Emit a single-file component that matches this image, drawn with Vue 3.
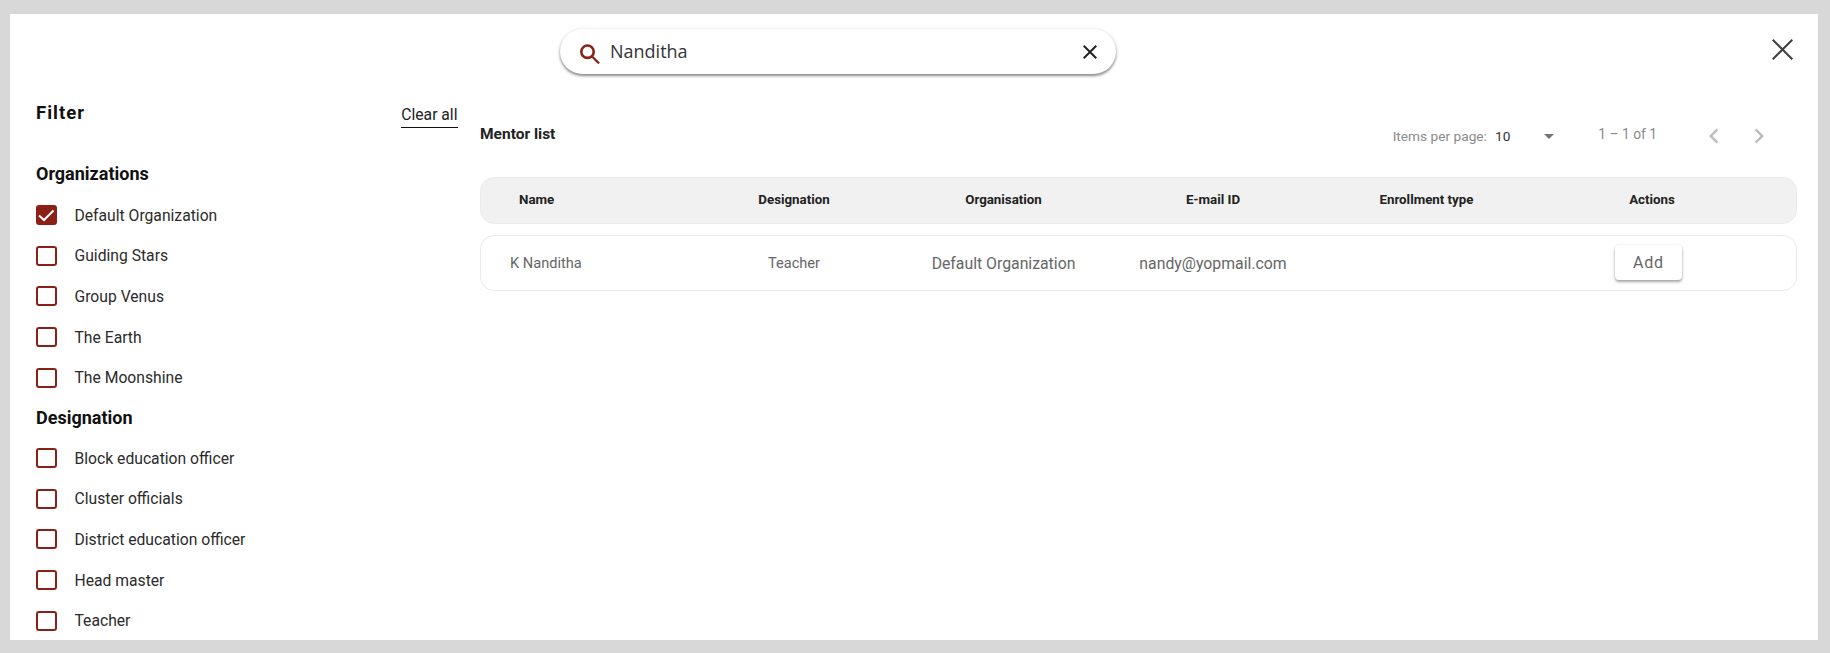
<script setup>
const orgs = [
  { label: 'Default Organization', checked: true },
  { label: 'Guiding Stars' },
  { label: 'Group Venus' },
  { label: 'The Earth' },
  { label: 'The Moonshine' },
]
const desigs = [
  { label: 'Block education officer' },
  { label: 'Cluster officials' },
  { label: 'District education officer' },
  { label: 'Head master' },
  { label: 'Teacher' },
]
const groups = [
  { title: 'Organizations', items: orgs },
  { title: 'Designation', items: desigs },
]
const heads = ['Designation', 'Organisation', 'E-mail ID', 'Enrollment type', 'Actions']
</script>

<template>
  <div class="page">
    <div class="panel">
      <div class="top">
        <div class="search">
          <svg class="s-icon" viewBox="0 0 20 20" width="20" height="20"><circle cx="7.5" cy="7.7" r="6.2" stroke="#8a2016" stroke-width="2.6" fill="none"/><path d="M11.8 12.2 19 19.4" stroke="#8a2016" stroke-width="2.2" fill="none"/></svg>
          <span class="s-text">Nanditha</span>
          <svg class="s-clear" viewBox="0 0 24 24" width="24" height="24"><path fill="#222" d="M19 6.41 17.59 5 12 10.59 6.41 5 5 6.41 10.59 12 5 17.59 6.41 19 12 13.41 17.59 19 19 17.59 13.41 12z"/></svg>
        </div>
        <svg class="close" viewBox="0 0 21 21" width="21" height="21"><path d="M.7.7 20.3 20.3M20.3.7.7 20.3" stroke="#404040" stroke-width="2" fill="none"/></svg>
      </div>
      <div class="body">
        <aside class="filter">
          <div class="f-head">
            <span class="f-title">Filter</span>
            <span class="clear">Clear all</span>
          </div>
          <div v-for="g in groups" :key="g.title" class="group">
            <div class="g-title">{{ g.title }}</div>
            <div v-for="i in g.items" :key="i.label" class="item">
              <span class="box" :class="{ on: i.checked }">
                <svg v-if="i.checked" viewBox="0 0 21 20" width="21" height="20"><path d="M3 10.5 8 15 17.5 5.5" stroke="#fff" stroke-width="2" fill="none"/></svg>
              </span>
              <span class="lbl">{{ i.label }}</span>
            </div>
          </div>
        </aside>
        <main class="main">
          <div class="m-head">
            <span class="m-title">Mentor list</span>
            <div class="pager">
              <span class="ipp">Items per page:</span>
              <span class="ten">10</span>
              <span class="caret"></span>
              <span class="range">1 – 1 of 1</span>
              <svg class="chev" viewBox="0 0 24 24" width="30" height="30"><path fill="#bdbdbd" d="M15.41 7.41 14 6l-6 6 6 6 1.41-1.41L10.83 12z"/></svg>
              <svg class="chev second" viewBox="0 0 24 24" width="30" height="30"><path fill="#bdbdbd" d="M8.59 16.59 10 18l6-6-6-6-1.41 1.41L13.17 12z"/></svg>
            </div>
          </div>
          <div class="t-row t-header">
            <span class="name-h">Name</span>
            <span v-for="h in heads" :key="h">{{ h }}</span>
          </div>
          <div class="t-row t-body">
            <span class="name-c">K Nanditha</span>
            <span class="small">Teacher</span>
            <span>Default Organization</span>
            <span>nandy@yopmail.com</span>
            <span></span>
            <span class="act"><button class="add">Add</button></span>
          </div>
        </main>
      </div>
    </div>
  </div>
</template>

<style>
html, body { margin: 0; background: #d8d8d8; }
</style>

<style scoped>
.page {
  width: 1830px;
  height: 653px;
  box-sizing: border-box;
  padding: 14px 12px 13px 10px;
  background: #d8d8d8;
  font-family: Roboto, sans-serif;
  overflow: hidden;
}
.panel {
  height: 100%;
  background: #fff;
  display: flex;
  flex-direction: column;
  overflow: hidden;
}
.top {
  height: 60px;
  flex: none;
  position: relative;
  padding: 15px 0 0 550px;
  box-sizing: border-box;
}
.search {
  width: 556px;
  height: 45px;
  border-radius: 23px;
  background: #fff;
  box-shadow: 0 2px 3px rgba(0,0,0,.45), 0 0 4px rgba(0,0,0,.08);
  display: flex;
  align-items: center;
  box-sizing: border-box;
  padding: 0 14px 0 20px;
}
.s-icon { flex: none; margin-top: 4px; }
.s-text {
  font-family: "Open Sans", sans-serif;
  font-size: 18px;
  color: #333;
  margin-left: 10px;
  margin-bottom: 2px;
  flex: 1;
}
.close { position: absolute; right: 25px; top: 25px; }
.body { display: flex; flex: 1; min-height: 0; }
.filter { width: 470px; flex: none; box-sizing: border-box; padding: 0 22.5px 0 26px; }
.f-head {
  display: flex;
  justify-content: space-between;
  align-items: center;
  height: 78px;
}
.f-title { font-size: 18.5px; font-weight: 700; letter-spacing: 1px; color: #111; }
.clear {
  font-size: 15.7px;
  color: #222;
  border-bottom: 1.5px solid #111;
  padding-bottom: 3px;
  margin-top: 6px;
}
.g-title {
  height: 40px;
  display: flex;
  align-items: center;
  font-size: 18px;
  font-weight: 700;
  color: #111;
}
.f-head + .group .g-title { height: 43px; }
.item { height: 40.6px; display: flex; align-items: center; }
.box {
  width: 21px;
  height: 20px;
  box-sizing: border-box;
  border: 2px solid #8a2016;
  border-radius: 3px;
  flex: none;
  position: relative;
}
.box.on { background: #8a2016; }
.box svg { position: absolute; left: -2px; top: -2px; }
.lbl { margin-left: 17.5px; font-size: 15.7px; color: #2b2b2b; }
.main { flex: 1; padding-right: 21px; min-width: 0; }
.m-head { height: 103px; display: flex; align-items: flex-start; justify-content: space-between; }
.m-title {
  margin-top: 51px;
  font-size: 15.5px;
  font-weight: 700;
  color: #222;
}
.pager {
  margin-top: 47px;
  margin-right: 23px;
  height: 30px;
  display: flex;
  align-items: center;
  color: #8a8a8a;
}
.ipp { font-size: 13.7px; white-space: nowrap; }
.ten { margin-left: 8px; font-size: 13.7px; color: #333; }
.caret {
  margin-left: 34px;
  border-left: 5px solid transparent;
  border-right: 5px solid transparent;
  border-top: 5px solid #757575;
}
.range { margin-left: 44px; margin-bottom: 5px; font-size: 13.8px; white-space: nowrap; }
.chev { margin-left: 42px; }
.chev.second { margin-left: 15px; }
.t-row {
  display: grid;
  grid-template-columns: 208px 210px 209px 210px 217px 234px 1fr;
  align-items: center;
  border-radius: 14px;
  box-sizing: border-box;
  text-align: center;
}
.t-header {
  height: 47px;
  background: #f1f1f1;
  border: 1px solid #ebebeb;
  padding-bottom: 2px;
  font-size: 13.3px;
  font-weight: 700;
  color: #222;
}
.name-h { text-align: left; padding-left: 38px; }
.t-body {
  margin-top: 11px;
  height: 56px;
  border: 1px solid #e9e9e9;
  font-size: 15.8px;
  color: #666;
}
.name-c { text-align: left; padding-left: 29px; font-size: 14.6px; }
.small { font-size: 14.6px; }
.act { text-align: left; padding-left: 80px; }
.add {
  width: 67px;
  height: 35px;
  border: none;
  border-radius: 4px;
  background: #fff;
  box-shadow: 0 2px 3px rgba(0,0,0,.35), 0 0 2px rgba(0,0,0,.1);
  font-family: Roboto, sans-serif;
  font-size: 16px;
  letter-spacing: .8px;
  color: #666;
  padding: 0;
  margin-bottom: 2px;
}
</style>
